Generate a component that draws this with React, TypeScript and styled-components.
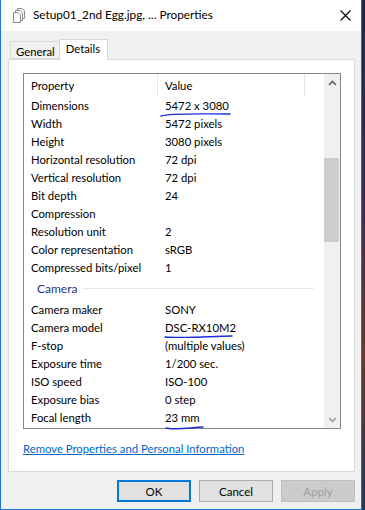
import React from "react";
import styled, { createGlobalStyle } from "styled-components";

const Global = createGlobalStyle`
  html, body { margin: 0; padding: 0; }
  body {
    width: 365px; height: 510px; overflow: hidden;
    background: linear-gradient(180deg, #1b2a4a 0%, #3b2a5c 40%, #6a3a2a 70%, #1f3560 100%);
    font-family: "Lato", "Liberation Sans", sans-serif;
  }
`;

const FONT = `"Lato", "Liberation Sans", sans-serif`;

const Window = styled.div`
  box-sizing: border-box;
  width: 362px;
  height: 510px;
  border: 1px solid #1a78d4;
  border-top: none;
  background: #f0f0f0;
  display: flex;
  flex-direction: column;
  font-family: ${FONT};
  font-size: 11.3px;
  color: #000;
`;

const TitleBar = styled.div`
  height: 31px;
  background: #fff;
  display: flex;
  align-items: center;
  padding-left: 11px;
  padding-right: 10px;
  flex-shrink: 0;
`;

const TitleText = styled.div`
  margin-left: 7px;
  font-size: 11.8px;
  flex: 1;
  padding-bottom: 2px;
`;

const Body = styled.div`
  flex: 1;
  display: flex;
  flex-direction: column;
  padding: 8px 6px 0 7px;
`;

const Tabs = styled.div`
  display: flex;
  align-items: flex-end;
  height: 20px;
  padding-left: 2px;
  position: relative;
  z-index: 1;
`;

const Tab = styled.div<{ $active?: boolean }>`
  box-sizing: border-box;
  border: 1px solid #d9d9d9;
  border-bottom: ${(p) => (p.$active ? "none" : "1px solid #d9d9d9")};
  background: ${(p) => (p.$active ? "#fff" : "#f0f0f0")};
  height: ${(p) => (p.$active ? "21px" : "18px")};
  margin-bottom: ${(p) => (p.$active ? "-1px" : "0")};
  padding: ${(p) => (p.$active ? "2px 7px 0 6px" : "3px 4px 0 5px")};
  margin-left: ${(p) => (p.$active ? "-1px" : "0")};
  line-height: 14px;
`;

const Panel = styled.div`
  box-sizing: border-box;
  height: 413px;
  background: #fff;
  border: 1px solid #d9d9d9;
  padding: 13px 14px 0 14px;
  display: flex;
  flex-direction: column;
`;

const List = styled.div`
  box-sizing: border-box;
  width: 318px;
  height: 356px;
  border: 1px solid #828790;
  display: flex;
`;

const ListMain = styled.div`
  flex: 1;
  display: flex;
  flex-direction: column;
`;

const Header = styled.div`
  display: grid;
  grid-template-columns: 134px 147px 1fr;
  height: 22px;
  align-items: center;
`;

const HeaderCell = styled.div<{ $sep?: boolean }>`
  height: 100%;
  display: flex;
  align-items: center;
  padding-left: 7px;
  border-right: ${(p) => (p.$sep ? "1px solid #e5e5e5" : "none")};
  box-sizing: border-box;
  padding-top: 1px;
`;

const Row = styled.div`
  display: grid;
  grid-template-columns: 134px 1fr;
  height: 18px;
  align-items: center;
`;

const Cell = styled.div`
  padding-left: 7px;
  position: relative;
  white-space: nowrap;
`;

const GroupRow = styled.div`
  height: 24px;
  display: flex;
  align-items: center;
  padding-left: 13px;
  padding-right: 10px;
  gap: 5px;
  color: #1e3287;
  font-size: 12px;
`;

const GroupLine = styled.div`
  flex: 1;
  height: 1px;
  background: #e2e6f0;
  margin-top: 1px;
`;

const Scrollbar = styled.div`
  width: 16px;
  background: #f0f0f0;
  display: flex;
  flex-direction: column;
  align-items: stretch;
`;

const ArrowBtn = styled.div`
  height: 17px;
  display: flex;
  align-items: center;
  justify-content: center;
`;

const Track = styled.div`
  flex: 1;
  display: flex;
  flex-direction: column;
  padding-top: 67px;
`;

const Thumb = styled.div`
  height: 84px;
  background: #cdcdcd;
  margin-right: 1px;
`;

const Scribble = styled.svg`
  position: absolute;
  left: 0;
  top: 0;
  overflow: visible;
  pointer-events: none;
`;

const Link = styled.a`
  margin-top: 13px;
  color: #0066cc;
  text-decoration: underline;
  font-size: 11.3px;
  align-self: flex-start;
  cursor: pointer;
`;

const Buttons = styled.div`
  display: flex;
  justify-content: flex-end;
  gap: 8px;
  padding-top: 8px;
  padding-right: 0;
`;

const Button = styled.div<{ $primary?: boolean; $disabled?: boolean }>`
  box-sizing: border-box;
  width: 74px;
  height: 22px;
  display: flex;
  align-items: center;
  justify-content: center;
  background: ${(p) => (p.$disabled ? "#cccccc" : "#e1e1e1")};
  border: ${(p) =>
    p.$primary ? "2px solid #0078d7" : p.$disabled ? "1px solid #bfbfbf" : "1px solid #adadad"};
  color: ${(p) => (p.$disabled ? "#a0a0a0" : "#000")};
  font-size: 11.5px;
`;

const props1: [string, string][] = [
  ["Dimensions", "5472 x 3080"],
  ["Width", "5472 pixels"],
  ["Height", "3080 pixels"],
  ["Horizontal resolution", "72 dpi"],
  ["Vertical resolution", "72 dpi"],
  ["Bit depth", "24"],
  ["Compression", ""],
  ["Resolution unit", "2"],
  ["Color representation", "sRGB"],
  ["Compressed bits/pixel", "1"],
];

const props2: [string, string][] = [
  ["Camera maker", "SONY"],
  ["Camera model", "DSC-RX10M2"],
  ["F-stop", "(multiple values)"],
  ["Exposure time", "1/200 sec."],
  ["ISO speed", "ISO-100"],
  ["Exposure bias", "0 step"],
  ["Focal length", "23 mm"],
];

const scribbles: Record<string, string> = {
  "5472 x 3080": "M3 17 C 12 14, 40 15, 72 15",
  "DSC-RX10M2": "M7 16 C 20 17, 50 16, 74 15",
  "23 mm": "M8 17 C 14 19, 30 17, 45 16",
};

const PagesIcon = () => (
  <svg width="14" height="15" viewBox="0 0 14 15">
    <path d="M5.5 0.5 H10 L12.5 3 V10.5 H5.5 Z" fill="#fff" stroke="#8a8a8a" />
    <path d="M3.5 2.5 H8 L10.5 5 V12.5 H3.5 Z" fill="#fff" stroke="#8a8a8a" />
    <path d="M1.5 4.5 H6 L8.5 7 V14.5 H1.5 Z" fill="#fff" stroke="#8a8a8a" />
  </svg>
);

const CloseIcon = () => (
  <svg width="11" height="11" viewBox="0 0 11 11">
    <path d="M0.5 0.5 L10.5 10.5 M10.5 0.5 L0.5 10.5" stroke="#000" strokeWidth="1.1" />
  </svg>
);

const Chevron = ({ up }: { up?: boolean }) => (
  <svg width="9" height="6" viewBox="0 0 9 6">
    <path
      d={up ? "M1 5 L4.5 1.5 L8 5" : "M1 1 L4.5 4.5 L8 1"}
      fill="none"
      stroke={up ? "#606060" : "#a0a0a0"}
      strokeWidth="1.6"
    />
  </svg>
);

const ValueCell = ({ v }: { v: string }) => (
  <Cell>
    {v}
    {scribbles[v] && (
      <Scribble width="80" height="20">
        <path d={scribbles[v]} fill="none" stroke="#1a2ed8" strokeWidth="1.4" strokeLinecap="round" />
      </Scribble>
    )}
  </Cell>
);

export default function App() {
  return (
    <>
      <Global />
      <Window>
        <TitleBar>
          <PagesIcon />
          <TitleText>Setup01_2nd Egg.jpg, ... Properties</TitleText>
          <CloseIcon />
        </TitleBar>
        <Body>
          <Tabs>
            <Tab>General</Tab>
            <Tab $active>Details</Tab>
          </Tabs>
          <Panel>
            <List>
              <ListMain>
                <Header>
                  <HeaderCell $sep>Property</HeaderCell>
                  <HeaderCell $sep>Value</HeaderCell>
                  <div />
                </Header>
                {props1.map(([k, v]) => (
                  <Row key={k}>
                    <Cell>{k}</Cell>
                    <ValueCell v={v} />
                  </Row>
                ))}
                <GroupRow>
                  Camera
                  <GroupLine />
                </GroupRow>
                {props2.map(([k, v]) => (
                  <Row key={k}>
                    <Cell>{k}</Cell>
                    <ValueCell v={v} />
                  </Row>
                ))}
              </ListMain>
              <Scrollbar>
                <ArrowBtn>
                  <Chevron up />
                </ArrowBtn>
                <Track>
                  <Thumb />
                </Track>
                <ArrowBtn>
                  <Chevron />
                </ArrowBtn>
              </Scrollbar>
            </List>
            <Link>Remove Properties and Personal Information</Link>
          </Panel>
          <Buttons>
            <Button $primary>OK</Button>
            <Button>Cancel</Button>
            <Button $disabled>Apply</Button>
          </Buttons>
        </Body>
      </Window>
    </>
  );
}
